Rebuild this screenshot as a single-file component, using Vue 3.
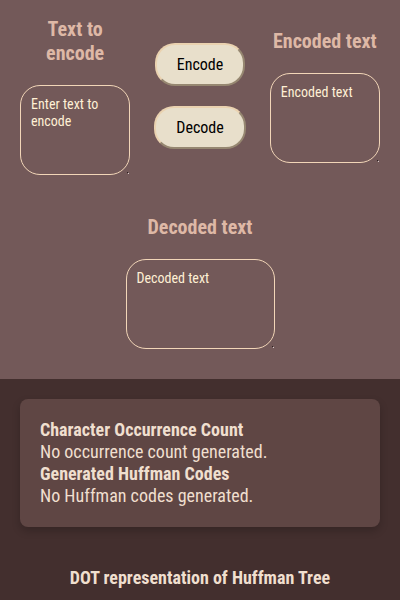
<script setup>
import { ref } from 'vue'

const source = ref('')
const encoded = ref('')
const decoded = ref('')
</script>

<template>
  <main class="page">
    <section class="coder">
      <div class="row">
        <div class="field">
          <label class="title" for="source">Text to encode</label>
          <textarea id="source" v-model="source" class="box" placeholder="Enter text to encode"></textarea>
        </div>
        <div class="actions">
          <button class="action" type="button">Encode</button>
          <button class="action" type="button">Decode</button>
        </div>
        <div class="field">
          <label class="title" for="encoded">Encoded text</label>
          <textarea id="encoded" v-model="encoded" class="box" placeholder="Encoded text"></textarea>
        </div>
      </div>
      <div class="field decoded">
        <label class="title" for="decoded">Decoded text</label>
        <textarea id="decoded" v-model="decoded" class="box" placeholder="Decoded text"></textarea>
      </div>
    </section>
    <section class="results">
      <div class="card">
        <h3>Character Occurrence Count</h3>
        <p>No occurrence count generated.</p>
        <h3>Generated Huffman Codes</h3>
        <p>No Huffman codes generated.</p>
      </div>
      <h3 class="tree-title">DOT representation of Huffman Tree</h3>
    </section>
  </main>
</template>

<style>
body {
  margin: 0;
  background: #432f2e;
}
</style>

<style scoped>
.page {
  font-family: "Roboto Condensed", Roboto, sans-serif;
  color: #f0dfcf;
}
.coder {
  display: flex;
  flex-direction: column;
  align-items: center;
  gap: 40px;
  padding: 17px 20px 30px;
  background: #735959;
}
.row {
  display: flex;
  align-items: center;
  justify-content: space-between;
  align-self: stretch;
  gap: 24px;
}
.field {
  display: flex;
  flex: 1 1 0;
  flex-direction: column;
  align-items: center;
  gap: 20px;
  min-width: 0;
}
.decoded {
  flex: none;
}
.title {
  color: #deb8a6;
  font-size: 20px;
  font-weight: 700;
  line-height: 24px;
  text-align: center;
}
.box {
  box-sizing: border-box;
  width: 100%;
  height: 90px;
  padding: 10px;
  border: 1px solid #f2d6b8;
  border-radius: 20px;
  background: transparent;
  color: #fff0d5;
  font-family: inherit;
  font-size: 14px;
  line-height: 17px;
}
.decoded .box {
  width: 149px;
}
.box::placeholder {
  color: #fff0d5;
}
/* A minimal two-dot resize grip in the corner. */
.box::-webkit-resizer {
  background-image: linear-gradient(#d8cccc, #d8cccc), linear-gradient(#2c2222, #2c2222);
  background-position: right 0 bottom 0, right 1px bottom 1px;
  background-repeat: no-repeat;
  background-size: 1px 1px;
}
.actions {
  display: flex;
  flex-direction: column;
  align-items: center;
  gap: 20px;
}
.action {
  padding: 10px 20px;
  border: 2px outset #ead2b0;
  border-radius: 20px;
  background: #e8dfcb;
  color: #000;
  font-family: inherit;
  font-size: 16px;
  line-height: 19px;
}
.results {
  padding: 20px;
  background: #432f2e;
}
.card {
  padding: 20px;
  border-radius: 8px;
  background: #5f4644;
  box-shadow: 0 4px 8px rgba(0, 0, 0, 0.2);
}
h3,
p {
  margin: 0;
  font-size: 18px;
  line-height: 22px;
}
.tree-title {
  margin-top: 40px;
  text-align: center;
}
</style>
